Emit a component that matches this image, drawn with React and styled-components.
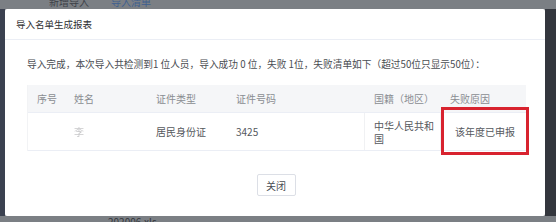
import React from 'react'
import styled, { createGlobalStyle } from 'styled-components'

const GlobalStyle = createGlobalStyle`
  html, body {
    margin: 0;
    padding: 0;
    background: #7b7f84;
  }
  body {
    font-family: "Noto Sans CJK SC", "Noto Sans", "Liberation Sans", sans-serif;
  }
`

const Page = styled.div`
  width: 556px;
  height: 222px;
  overflow: hidden;
  display: flex;
  flex-direction: column;
  background: #7b7f84;
`

const TopBar = styled.div`
  height: 9px;
  overflow: hidden;
  display: flex;
  gap: 22px;
  padding-left: 49px;
  font-size: 10px;
  line-height: 10px;
`

const Tab = styled.span`
  color: ${props => props.active ? '#3f5f8f' : '#3d4148'};
  margin-top: 0;
`

const Middle = styled.div`
  display: flex;
  height: 207px;
`

const Strip = styled.div`
  width: ${props => props.w}px;
  background: ${props => props.color};
`

const Dialog = styled.div`
  width: 540px;
  background: #fff;
  border-radius: 2px;
  display: flex;
  flex-direction: column;
`

const Header = styled.div`
  height: 30px;
  padding-left: 11px;
  display: flex;
  align-items: center;
  font-size: 9.5px;
  color: #303133;
  border-bottom: 1px solid #ebeef5;
`

const Body = styled.div`
  padding: 0 20px 0 22px;
  display: flex;
  flex-direction: column;
`

const Summary = styled.div`
  margin-top: 18px;
  font-size: 9.7px;
  line-height: 12px;
  color: #4a4d52;
  white-space: nowrap;
`

const Table = styled.div`
  position: relative;
  margin-top: 15px;
  width: 498px;
  border-left: 1px solid #f2f3f5;
`

const Row = styled.div`
  display: grid;
  grid-template-columns: 37px 82px 80px 138px 76px 85px;
  height: ${props => props.h}px;
  background: ${props => props.head ? '#f5f6f8' : '#fff'};
  border-bottom: 1px solid #ebeef5;
`

const Cell = styled.div`
  display: flex;
  align-items: center;
  padding-left: 9px;
  font-size: 10px;
  line-height: 13px;
  color: ${props => props.head ? '#8a8d92' : '#55585d'};
  border-right: ${props => props.line ? '1px solid #f0f1f3' : 'none'};
  box-sizing: border-box;
`

const Blur = styled.span`
  color: #c9c9cb;
  filter: blur(0.6px);
`

const Marker = styled.div`
  position: absolute;
  left: 413px;
  top: 22px;
  width: 82px;
  height: 42px;
  border: 3px solid #d8232f;
`

const Footer = styled.div`
  display: flex;
  justify-content: center;
  margin-top: 23px;
`

const Button = styled.button`
  width: 39px;
  height: 22px;
  padding: 0;
  border: 1px solid #dcdfe6;
  border-radius: 2px;
  background: #fff;
  font-family: inherit;
  font-size: 10px;
  color: #4a4d52;
`

const BottomBar = styled.div`
  height: 6px;
  overflow: hidden;
  padding-left: 108px;
  font-size: 10px;
  line-height: 12px;
  color: #34373d;
`

const columns = ['序号', '姓名', '证件类型', '证件号码', '国籍（地区）', '失败原因']

const App = () => {
  return (
    <Page>
      <GlobalStyle />
      <TopBar>
        <Tab style={{ marginTop: -3 }}>新增导入</Tab>
        <Tab active style={{ marginTop: -3 }}>导入清单</Tab>
      </TopBar>
      <Middle>
        <Strip w={5} color='#3b4150' />
        <Dialog>
          <Header>导入名单生成报表</Header>
          <Body>
            <Summary>
              导入完成，本次导入共检测到1 位人员，导入成功 0 位，失败 1位，失败清单如下（超过50位只显示50位）：
            </Summary>
            <Table>
              <Row head h={27}>
                {columns.map(c => <Cell head key={c}>{c}</Cell>)}
              </Row>
              <Row h={37}>
                <Cell />
                <Cell><Blur>李</Blur></Cell>
                <Cell>居民身份证</Cell>
                <Cell line>3425</Cell>
                <Cell line>中华人民共和国</Cell>
                <Cell style={{ paddingLeft: 14 }}>该年度已申报</Cell>
              </Row>
              <Marker />
            </Table>
            <Footer>
              <Button>关闭</Button>
            </Footer>
          </Body>
        </Dialog>
        <Strip w={11} color='#33363d' />
      </Middle>
      <BottomBar>202006.xls</BottomBar>
    </Page>
  )
}

export default App
